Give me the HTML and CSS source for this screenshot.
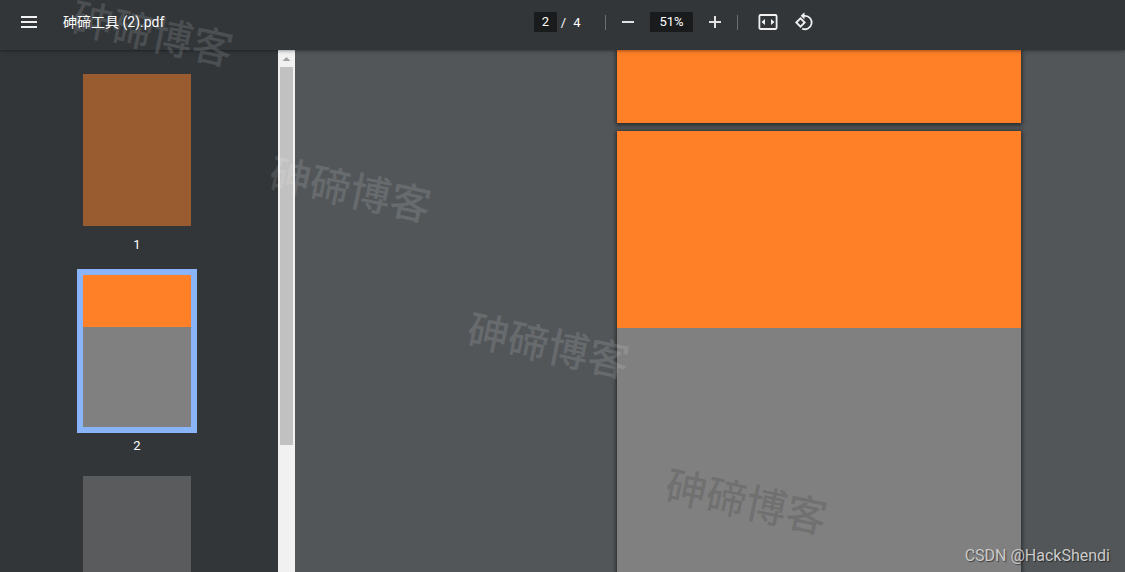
FILE: index.html
```html
<!DOCTYPE html>
<html lang="zh-CN">
<head>
<meta charset="utf-8">
<title>砷碲工具 (2).pdf</title>
<link rel="stylesheet" href="styles.css">
</head>
<body>
<header class="toolbar">
  <div class="toolbar-start">
    <button class="icon-button" type="button" aria-label="Menu">
      <svg width="16" height="12" viewBox="0 0 16 12"><path fill="#f1f1f1" d="M0 0h16v2H0zM0 5h16v2H0zM0 10h16v2H0z"/></svg>
    </button>
    <h1 class="title">砷碲工具 (2).pdf</h1>
  </div>
  <div class="toolbar-center">
    <input class="field page-field" type="text" value="2" aria-label="Page">
    <span class="slash">/</span>
    <span class="count">4</span>
    <span class="divider"></span>
    <button class="icon-button" type="button" aria-label="Zoom out">
      <svg width="12" height="12" viewBox="0 0 12 12"><path fill="#e2e2e2" d="M0 5h12v2H0z"/></svg>
    </button>
    <input class="field zoom-field" type="text" value="51%" aria-label="Zoom">
    <button class="icon-button" type="button" aria-label="Zoom in">
      <svg width="12" height="12" viewBox="0 0 12 12"><path fill="#e2e2e2" d="M0 5h12v2H0zM5 0h2v12H5z"/></svg>
    </button>
    <span class="divider"></span>
    <button class="icon-button fit" type="button" aria-label="Fit to width">
      <svg width="20" height="16" viewBox="0 0 20 16"><rect x="1.4" y="1" width="17.2" height="14" rx="1.2" fill="none" stroke="#f1f1f1" stroke-width="1.8"/><path fill="#f1f1f1" d="M7 5v6L3.500 8zM13 5v6l3.500-3z"/></svg>
    </button>
    <button class="icon-button" type="button" aria-label="Rotate counterclockwise">
      <svg width="20" height="20" viewBox="0 0 20 20"><g fill="none" stroke="#f1f1f1" stroke-width="1.8"><path d="M2.300 10.500l4.200-4.200 4.200 4.200-4.200 4.200z"/><path d="M9 3.800h2a6.700 6.700 0 1 1-2.800 12.800"/></g><path fill="#f1f1f1" d="M10.500.2v7.200L6.700 3.800z"/></svg>
    </button>
  </div>
</header>
<div class="body">
  <nav class="sidebar" aria-label="Thumbnails">
    <a class="thumb" href="#p1"><span class="sheet dim-orange"></span><span class="num">1</span></a>
    <a class="thumb" href="#p2"><span class="sheet split selected"></span><span class="num">2</span></a>
    <a class="thumb" href="#p3" aria-label="Next page"><span class="sheet dim-gray"></span></a>
  </nav>
  <div class="scrollbar">
    <svg class="arrow" width="17" height="17" viewBox="0 0 17 17"><path fill="#a3a3a3" d="M4.500 11h8L8.500 7z"/></svg>
    <div class="scroll-thumb"></div>
  </div>
  <main class="viewer">
    <section class="page page-first" id="p1"></section>
    <section class="page page-second" id="p2"></section>
  </main>
</div>
<div class="mark m1">砷碲博客</div>
<div class="mark m2">砷碲博客</div>
<div class="mark m3">砷碲博客</div>
<div class="mark m4">砷碲博客</div>
<div class="credit">CSDN @HackShendi</div>
</body>
</html>
```
FILE: styles.css
```css
* { box-sizing: border-box; }
body {
  margin: 0;
  height: 100vh;
  display: flex;
  flex-direction: column;
  position: relative;
  overflow: hidden;
  background: #525659;
  color: #fff;
  font-family: Roboto, "Noto Sans CJK SC", sans-serif;
  font-size: 13px;
}
.toolbar {
  position: relative;
  z-index: 1;
  flex: none;
  height: 50px;
  padding-bottom: 6px;
  display: flex;
  align-items: center;
  background: #323639;
  box-shadow: 0 0 4px rgba(0, 0, 0, 0.6);
}
.toolbar-start {
  flex: 1;
  display: flex;
  align-items: center;
  padding-left: 13px;
}
.toolbar-center {
  flex: none;
  width: 591px;
  display: flex;
  align-items: center;
}
.title {
  margin: 0 0 0 18px;
  font-size: 14px;
  font-weight: 400;
  line-height: 20px;
}
.icon-button {
  display: flex;
  align-items: center;
  justify-content: center;
  width: 32px;
  height: 32px;
  padding: 0;
  border: 0;
  background: none;
}
.field {
  height: 20px;
  padding: 0;
  border: 0;
  background: #191b1c;
  color: #fff;
  font: 13px/20px Roboto, sans-serif;
  text-align: center;
}
.page-field { width: 23px; }
.zoom-field { width: 43px; margin: 0 6px; }
.slash { width: 13px; text-align: center; }
.count { width: 14px; text-align: center; margin-right: 21px; }
.divider { width: 1px; height: 15px; background: #6b6e70; }
.divider + .icon-button { margin-left: 6px; }
.zoom-field + .icon-button { margin-right: 6px; }
.divider + .fit { margin-left: 14px; margin-right: 4px; }
.body {
  flex: 1;
  min-height: 0;
  display: flex;
}
.sidebar {
  width: 278px;
  padding: 24px 4px 0 0;
  overflow: hidden;
  display: flex;
  flex-direction: column;
  align-items: center;
  background: #323639;
}
.thumb {
  flex: none;
  width: 108px;
  color: #fff;
  text-align: center;
  text-decoration: none;
}
.sheet { display: block; height: 152px; }
.num { display: block; height: 49px; line-height: 38px; }
.dim-orange { background: #995c31; }
.dim-gray { background: #5a5b5d; }
.split { background: linear-gradient(#ff8027 52px, #808080 52px); }
.selected { box-shadow: 0 0 0 6px #8ab4f8; }
.scrollbar {
  width: 17px;
  background: #f1f1f1;
}
.arrow { display: block; }
.scroll-thumb {
  height: 378px;
  margin: 0 2px;
  background: #c1c1c1;
}
.viewer {
  flex: 1;
  padding-right: 104px;
  overflow: hidden;
  display: flex;
  flex-direction: column;
  align-items: flex-end;
  gap: 8px;
}
.page {
  flex: none;
  width: 404px;
  box-shadow: 0 1px 4px 1px rgba(0, 0, 0, 0.55);
}
.page-first { height: 73px; background: #ff8027; }
.page-second { height: 571px; background: linear-gradient(#ff8027 197px, #808080 197px); }
.mark {
  position: absolute;
  z-index: 2;
  width: 164px;
  font-family: "Noto Sans CJK SC", sans-serif;
  font-size: 41px;
  font-weight: 500;
  line-height: 60px;
  white-space: nowrap;
  transform: rotate(12deg);
  color: rgba(255, 255, 255, 0.12);
  pointer-events: none;
}
.m1 { left: 71px; top: 1px; }
.m2 { left: 269px; top: 157px; }
.m3 { left: 467px; top: 313px; }
.m4 { left: 665px; top: 469px; color: rgba(0, 0, 0, 0.12); }
.credit {
  position: absolute;
  z-index: 3;
  right: 15px;
  bottom: 6px;
  font-size: 16px;
  line-height: 20px;
  color: #cacaca;
  text-shadow: 1px 1px 1px rgba(0, 0, 0, 0.5);
}
```
